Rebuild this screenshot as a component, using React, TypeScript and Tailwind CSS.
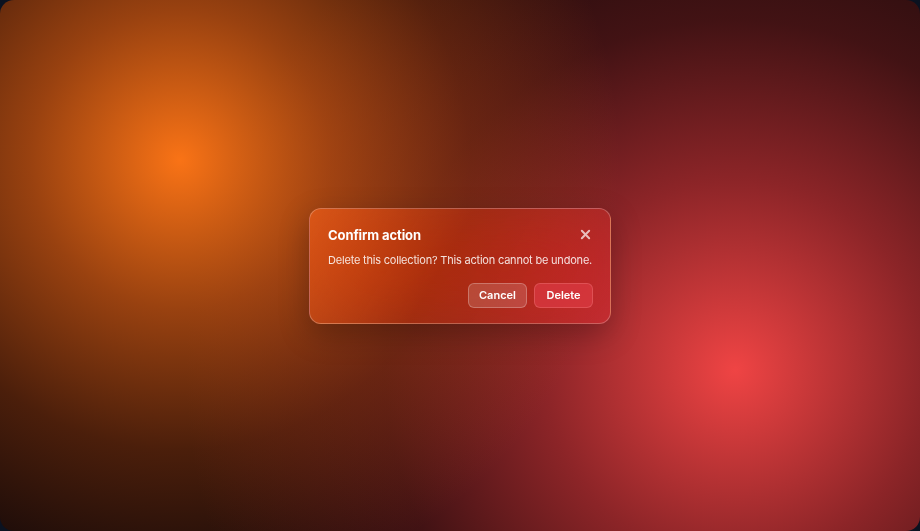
import React from "react";

export default function App() {
  return (
    <div className="w-[920px] h-[531px] bg-[#0b1220]" style={{ fontFamily: "Inter, 'Noto Sans', sans-serif" }}>
      <div className="relative w-full h-full rounded-[14px] overflow-hidden bg-[#150909] bg-[radial-gradient(circle_at_180px_160px,rgba(249,115,22,1)_0px,rgba(234,100,20,0.62)_150px,rgba(200,80,15,0.3)_290px,transparent_440px),radial-gradient(circle_at_735px_370px,rgba(239,68,68,1)_0px,rgba(220,55,60,0.6)_190px,rgba(170,40,45,0.3)_350px,transparent_550px)] flex items-center justify-center">
        <div className="w-[302px] rounded-[12px] border border-white/25 bg-[linear-gradient(120deg,rgba(245,100,30,0.62)_0%,rgba(190,55,25,0.45)_45%,rgba(220,50,60,0.42)_100%)] backdrop-blur-2xl backdrop-saturate-150 shadow-[0_10px_30px_rgba(0,0,0,0.25)] pt-[18px] pb-[15px] pl-[18px] pr-[17px]">
          <div className="flex items-center justify-between">
            <h2 className="text-[13px] font-bold text-white leading-[16px] tracking-[-0.1px]">Confirm action</h2>
            <button className="text-white/70 mr-[2px]">
              <svg width="11" height="11" viewBox="0 0 12 12" fill="none" stroke="currentColor" strokeWidth="2.2" strokeLinecap="round">
                <path d="M2 2L10 10M10 2L2 10" />
              </svg>
            </button>
          </div>
          <p className="mt-[10px] text-[11px] leading-[14px] text-white/85 whitespace-nowrap tracking-[-0.2px]">Delete this collection? This action cannot be undone.</p>
          <div className="mt-[16px] flex justify-end gap-[7px]">
            <button className="h-[25px] w-[59px] rounded-[6px] border border-white/25 bg-white/15 text-[11px] font-semibold text-white">Cancel</button>
            <button className="h-[25px] w-[59px] rounded-[6px] border border-red-300/25 bg-[#d93a42]/75 text-[11px] font-semibold text-white">Delete</button>
          </div>
        </div>
      </div>
    </div>
  );
}
